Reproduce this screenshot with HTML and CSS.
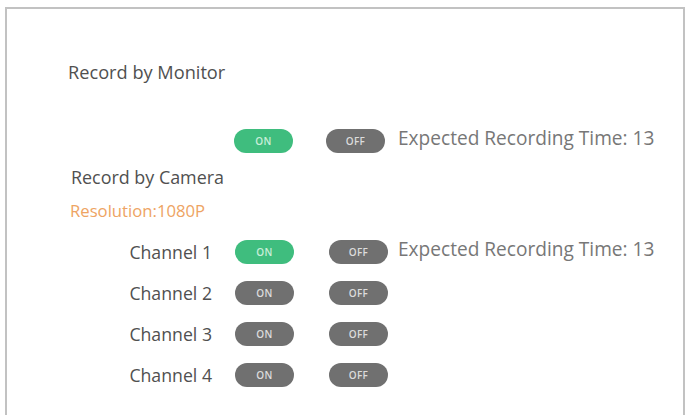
FILE: index.html
```html
<!DOCTYPE html>
<html>
<head>
<meta charset="utf-8">
<link rel="stylesheet" href="styles.css">
</head>
<body>
<div class="panel">
  <div class="title">Record by Monitor</div>
  <div class="row row-monitor">
    <span class="label"></span>
    <span class="pill on">ON</span>
    <span class="pill off">OFF</span>
    <span class="expected">Expected Recording Time: 13</span>
  </div>
  <div class="title camera">Record by Camera</div>
  <div class="resolution">Resolution:1080P</div>
  <div class="channels">
    <div class="row">
      <span class="label">Channel 1</span>
      <span class="pill on">ON</span>
      <span class="pill off">OFF</span>
      <span class="expected">Expected Recording Time: 13</span>
    </div>
    <div class="row">
      <span class="label">Channel 2</span>
      <span class="pill off">ON</span>
      <span class="pill off">OFF</span>
    </div>
    <div class="row">
      <span class="label">Channel 3</span>
      <span class="pill off">ON</span>
      <span class="pill off">OFF</span>
    </div>
    <div class="row">
      <span class="label">Channel 4</span>
      <span class="pill off">ON</span>
      <span class="pill off">OFF</span>
    </div>
  </div>
</div>
</body>
</html>
```
FILE: styles.css
```css
html, body {
  margin: 0;
  padding: 0;
  background: #ffffff;
  overflow: hidden;
}
body {
  font-family: "Open Sans", "Noto Sans", sans-serif;
  color: #505050;
}
.panel {
  margin: 7px 2px 0 5px;
  height: 420px;
  border: 2px solid #c2c2c2;
  border-bottom: none;
  box-sizing: border-box;
}
.title {
  font-size: 18.2px;
  line-height: 24px;
  height: 24px;
  padding-left: 61px;
  margin-top: 51px;
  color: #505050;
}
.title.camera {
  margin-top: 11px;
  padding-left: 64px;
  font-size: 17.9px;
}
.resolution {
  font-size: 16.7px;
  line-height: 22px;
  height: 22px;
  margin-top: 11px;
  padding-left: 63px;
  color: #eea463;
}
.row {
  display: flex;
  align-items: center;
  height: 26px;
}
.row-monitor {
  margin-top: 44px;
}
.channels {
  margin-top: 17px;
  display: flex;
  flex-direction: column;
  gap: 15px;
}
.label {
  width: 205px;
  text-align: right;
  font-size: 17.7px;
  color: #505050;
  flex: none;
}
.pill {
  flex: none;
  width: 59px;
  height: 24px;
  border-radius: 12px;
  display: flex;
  align-items: center;
  justify-content: center;
  font-size: 10px;
  font-weight: 600;
  color: #dcdcdc;
  letter-spacing: 0.3px;
}
.pill.on {
  background: #3fbd7e;
  margin-left: 23px;
  color: #c9eed9;
}
.pill.off {
  background: #707070;
  margin-left: 23px;
}
.pill + .pill {
  margin-left: 35px;
}
.row-monitor .pill.on {
  margin-left: 22px;
}
.row-monitor .pill + .pill {
  margin-left: 33px;
}
.expected {
  margin-left: 10px;
  font-size: 19.1px;
  color: #777777;
  white-space: nowrap;
  margin-top: -6px;
}
.row-monitor .expected {
  margin-left: 13px;
}
```
